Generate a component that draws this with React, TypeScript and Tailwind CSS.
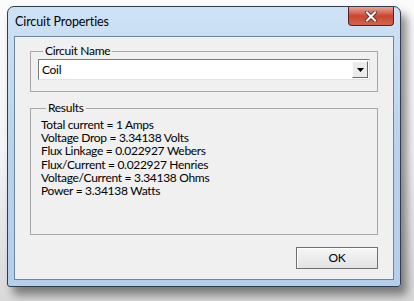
import { useState } from "react";

const results = [
  "Total current = 1 Amps",
  "Voltage Drop = 3.34138 Volts",
  "Flux Linkage = 0.022927 Webers",
  "Flux/Current = 0.022927 Henries",
  "Voltage/Current = 3.34138 Ohms",
  "Power = 3.34138 Watts",
];

const ui = { fontFamily: 'Lato, "Noto Sans", sans-serif' };

export default function App() {
  const [name] = useState("Coil");

  return (
    <div
      className="w-[414px] h-[301px] overflow-hidden bg-gradient-to-b from-[#fbfbfb] via-[#f4f4f4] to-[#d9d9d9] pt-[6px] pl-[7px]"
      style={ui}
    >
      <div className="w-[394px] h-[281px] rounded-t-[7px] rounded-b-[3px] border border-[#2f3d4f] bg-gradient-to-b from-[#cfe2f5] via-[#b9d3ee] to-[#b4cfec] shadow-[6px_8px_10px_rgba(0,0,0,0.45)] flex flex-col">
        <div className="h-[29px] flex items-center pl-[7px] pr-[6px] shrink-0">
          <span className="text-[12.5px] tracking-[-0.1px] text-black flex-1 pt-[2px]">Circuit Properties</span>
          <button className="self-start w-[46px] h-[19px] rounded-b-[4px] border border-[#5a2020] border-t-0 bg-gradient-to-b from-[#e8a496] via-[#c9452f] to-[#d3644f] flex items-center justify-center">
            <svg width="12" height="11" viewBox="0 0 12 11">
              <path d="M2 1.5 L10 9.5 M10 1.5 L2 9.5" stroke="#3a1414" strokeWidth="3.6" strokeLinecap="square" />
              <path d="M2 1.5 L10 9.5 M10 1.5 L2 9.5" stroke="#ffffff" strokeWidth="2.2" strokeLinecap="square" />
            </svg>
          </button>
        </div>
        <div className="mx-[6px] mb-[6px] flex-1 border border-[#6f8599] bg-[#f0f0f0] flex flex-col px-[15px] text-[12px] tracking-[-0.3px] text-black">
          <fieldset className="mt-[7px] h-[48px] border border-[#a7a7a7] px-[7px] pb-[8px]">
            <legend className="ml-[5px] px-[2px] leading-[14px] text-[12px]">Circuit Name</legend>
            <div className="mt-[1px] h-[21px] flex items-stretch border border-t-[#7a7a7a] border-l-[#7a7a7a] border-r-[#e3e3e3] border-b-[#e3e3e3] bg-white">
              <span className="flex-1 pl-[3px] leading-[19px]">{name}</span>
              <div className="my-[1px] mr-[1px] w-[16px] border border-t-[#ffffff] border-l-[#ffffff] border-r-[#6b6b6b] border-b-[#6b6b6b] bg-[#ececec] flex items-center justify-center">
                <svg width="7" height="4" viewBox="0 0 7 4">
                  <path d="M0 0 H7 L3.5 4 Z" fill="#000" />
                </svg>
              </div>
            </div>
          </fieldset>
          <fieldset className="mt-[9px] h-[134px] border border-[#a7a7a7] px-[10px]">
            <legend className="ml-[5px] px-[2px] leading-[14px] text-[12px]">Results</legend>
            <div className="pt-[3px] flex flex-col">
              {results.map((line) => (
                <span key={line} className="leading-[13.2px]">
                  {line}
                </span>
              ))}
            </div>
          </fieldset>
          <div className="flex justify-end mt-[12px]">
            <button className="w-[82px] h-[22px] border border-[#707070] bg-gradient-to-b from-[#f6f6f6] to-[#e3e3e3] shadow-[inset_1px_1px_0_#ffffff] text-[12px] leading-[18px]">
              OK
            </button>
          </div>
        </div>
      </div>
    </div>
  );
}
